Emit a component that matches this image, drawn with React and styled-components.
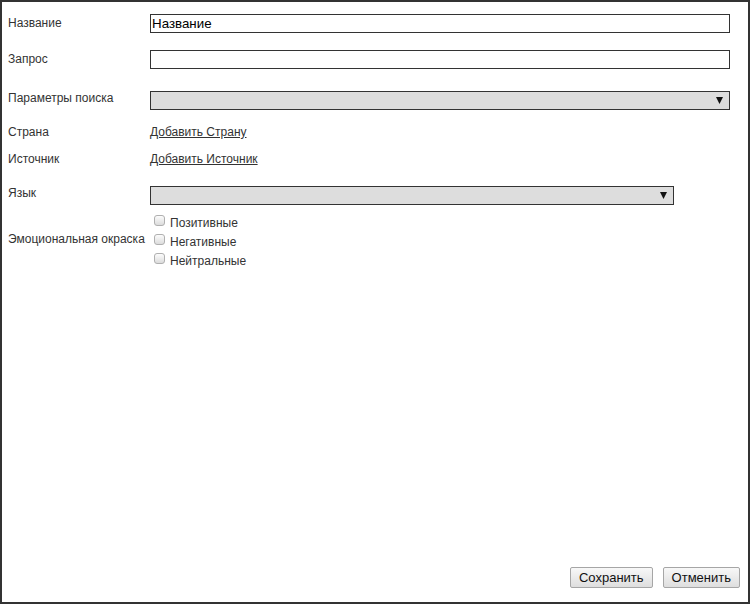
import styled, { createGlobalStyle } from 'styled-components';

const GlobalStyle = createGlobalStyle`
  html, body {
    margin: 0;
    padding: 0;
    background: #fff;
  }
  * {
    box-sizing: border-box;
  }
`;

const Frame = styled.div`
  width: 750px;
  height: 604px;
  border: 2px solid #333;
  display: flex;
  flex-direction: column;
  padding: 12px 8px 14px 6px;
  font-family: 'Liberation Sans', Arial, sans-serif;
  font-size: 12px;
  color: #333;
`;

const Form = styled.div`
  display: flex;
  flex-direction: column;
`;

const Row = styled.div`
  display: flex;
  align-items: flex-start;
  margin-top: ${(p) => p.$top || 0}px;
`;

const Label = styled.div`
  width: 142px;
  flex-shrink: 0;
  line-height: 14px;
  padding-top: ${(p) => p.$pad ?? 2}px;
`;

const Control = styled.div`
  width: ${(p) => p.$width || 580}px;
`;

const TextInput = styled.input`
  display: block;
  width: 100%;
  height: 19px;
  border: 1px solid #333;
  padding: 0 1px;
  font-family: 'Liberation Sans', Arial, sans-serif;
  font-size: 13.33px;
  color: #000;
  background: #fff;
  outline: none;
`;

const Select = styled.div`
  height: 19px;
  border: 1px solid #333;
  background: #ddd;
  display: flex;
  align-items: center;
  justify-content: flex-end;
  padding-right: 6px;
`;

const Link = styled.a`
  color: #333;
  text-decoration: underline;
  line-height: 14px;
  cursor: pointer;
`;

const Options = styled.div`
  display: flex;
  flex-direction: column;
  padding-top: 2px;
`;

const Option = styled.label`
  display: flex;
  align-items: center;
  height: 19px;
  gap: 5px;
  padding-left: 4px;
  font-size: 12px;
  color: #333;
`;

const Box = styled.span`
  width: 11px;
  height: 11px;
  border: 1px solid #b0b0b0;
  border-radius: 3px;
  background: linear-gradient(to bottom, #fcfcfc, #dcdcdc);
  margin-top: -4px;
`;

const Footer = styled.div`
  margin-top: auto;
  display: flex;
  justify-content: flex-end;
  gap: 10px;
`;

const Button = styled.button`
  height: 21px;
  padding: 0 8px;
  border: 1px solid #a6a6a6;
  border-radius: 2px;
  background: linear-gradient(to bottom, #f8f8f8, #dedede);
  font-family: 'Liberation Sans', Arial, sans-serif;
  font-size: 13px;
  color: #111;
  cursor: pointer;
`;

function Arrow() {
  return (
    <svg width="7" height="7" viewBox="0 0 7 7">
      <polygon points="0,0 7,0 3.5,7" fill="#111" />
    </svg>
  );
}

export default function App() {
  const moods = ['Позитивные', 'Негативные', 'Нейтральные'];

  return (
    <>
      <GlobalStyle />
      <Frame>
        <Form>
          <Row>
            <Label>Название</Label>
            <Control>
              <TextInput defaultValue="Название" />
            </Control>
          </Row>
          <Row $top={17}>
            <Label>Запрос</Label>
            <Control>
              <TextInput />
            </Control>
          </Row>
          <Row $top={22}>
            <Label $pad={0}>Параметры поиска</Label>
            <Control>
              <Select>
                <Arrow />
              </Select>
            </Control>
          </Row>
          <Row $top={15}>
            <Label $pad={0}>Страна</Label>
            <Link>Добавить Страну</Link>
          </Row>
          <Row $top={13}>
            <Label $pad={0}>Источник</Label>
            <Link>Добавить Источник</Link>
          </Row>
          <Row $top={20}>
            <Label $pad={0}>Язык</Label>
            <Control $width={524}>
              <Select>
                <Arrow />
              </Select>
            </Control>
          </Row>
          <Row $top={6}>
            <Label $pad={21}>Эмоциональная окраска</Label>
            <Options>
              {moods.map((m) => (
                <Option key={m}>
                  <Box />
                  {m}
                </Option>
              ))}
            </Options>
          </Row>
        </Form>
        <Footer>
          <Button>Сохранить</Button>
          <Button>Отменить</Button>
        </Footer>
      </Frame>
    </>
  );
}
